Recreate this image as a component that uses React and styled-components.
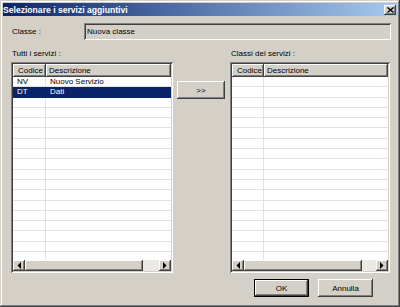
import React from 'react';
import styled, { createGlobalStyle } from 'styled-components';

const GlobalStyle = createGlobalStyle`
  html, body { margin: 0; padding: 0; background: #d4d0c8; }
  * { box-sizing: border-box; }
`;

const raised = `
  box-shadow: inset -1px -1px #404040, inset 1px 1px #ffffff,
    inset -2px -2px #808080, inset 2px 2px #d4d0c8;
`;
const sunken = `
  box-shadow: inset 1px 1px #808080, inset -1px -1px #ffffff,
    inset 2px 2px #404040, inset -2px -2px #d4d0c8;
`;

const Window = styled.div`
  width: 400px;
  height: 307px;
  padding: 3px;
  background: #d4d0c8;
  box-shadow: inset -1px -1px #404040, inset 1px 1px #d4d0c8,
    inset -2px -2px #808080, inset 2px 2px #ffffff;
  display: flex;
  flex-direction: column;
  font-family: "Liberation Sans", Arial, sans-serif;
  font-size: 8px;
  color: #000;
`;

const TitleBar = styled.div`
  height: 13px;
  display: flex;
  align-items: center;
  padding: 0 1px 0 0;
  background: linear-gradient(to right, #0a246a, #a6caf0);
`;

const Title = styled.span`
  color: #fff;
  font-weight: bold;
  font-size: 8.6px;
  white-space: nowrap;
`;

const CloseButton = styled.div`
  margin-left: auto;
  width: 12px;
  height: 10px;
  background: #d4d0c8;
  ${raised};
  display: flex;
  align-items: center;
  justify-content: center;
`;

const Content = styled.div`
  flex: 1;
  display: flex;
  flex-direction: column;
  padding: 0 6px 0 8px;
`;

const ClasseRow = styled.div`
  margin-top: 7px;
  height: 17px;
  display: flex;
  align-items: center;
`;

const FieldLabel = styled.span`
  width: 73px;
  padding-left: 1px;
`;

const ReadOnlyField = styled.div`
  flex: 1;
  height: 17px;
  padding: 0 3px;
  display: flex;
  align-items: center;
  background: #d4d0c8;
  ${sunken};
`;

const Columns = styled.div`
  margin-top: 9px;
  display: grid;
  grid-template-columns: 162px 57px 160px;
`;

const Column = styled.div`
  display: flex;
  flex-direction: column;
`;

const GroupLabel = styled.div`
  height: 10px;
  line-height: 10px;
  padding-left: 1px;
  margin-bottom: 3px;
`;

const Middle = styled.div`
  padding: 32px 0 0 4px;
`;

const Button = styled.div`
  width: ${p => p.$w}px;
  height: 18px;
  display: flex;
  align-items: center;
  justify-content: center;
  background: #d4d0c8;
  ${raised};
  ${p => p.$default && `
    box-shadow: inset 0 0 0 1px #000, inset -2px -2px #404040, inset 2px 2px #ffffff,
      inset -3px -3px #808080;
  `}
`;

const ListBox = styled.div`
  height: 211px;
  padding: 2px;
  background: #fff;
  ${sunken};
  display: flex;
  flex-direction: column;
  overflow: hidden;
`;

const HeaderRow = styled.div`
  display: grid;
  grid-template-columns: ${p => p.$first}px 1fr;
  height: 13px;
  flex: 0 0 13px;
`;

const HeaderCell = styled.div`
  background: #d4d0c8;
  ${raised};
  padding-left: ${p => p.$pad}px;
  display: flex;
  align-items: center;
  white-space: nowrap;
`;

const Body = styled.div`
  flex: 1;
  overflow: hidden;
  display: flex;
  flex-direction: column;
`;

const Row = styled.div`
  flex: 0 0 10.3px;
  display: grid;
  grid-template-columns: ${p => p.$first}px 1fr;
  background: ${p => (p.$selected ? '#0a246a' : '#fff')};
  color: ${p => (p.$selected ? '#fff' : '#000')};
  border-bottom: 1px solid ${p => (p.$selected ? '#0a246a' : '#e3e1dc')};
`;

const Cell = styled.div`
  padding-left: 4px;
  display: flex;
  align-items: center;
  white-space: nowrap;
  border-right: ${p => (p.$divider ? '1px solid #e3e1dc' : 'none')};
`;

const HScroll = styled.div`
  flex: 0 0 11px;
  display: flex;
`;

const ScrollArrow = styled.div`
  width: 12px;
  background: #d4d0c8;
  ${raised};
  display: flex;
  align-items: center;
  justify-content: center;
`;

const ScrollThumb = styled.div`
  width: ${p => p.$w}px;
  background: #d4d0c8;
  ${raised};
`;

const ScrollTrack = styled.div`
  flex: 1;
  background: #ebe9e5;
`;

const Footer = styled.div`
  margin-top: 6px;
  display: flex;
  justify-content: flex-end;
  gap: 9px;
  padding-right: 18px;
`;

const Arrow = ({ dir }) => (
  <svg width="4" height="7" viewBox="0 0 4 7">
    {dir === 'left'
      ? <polygon points="4,0 4,7 0.5,3.5" fill="#000" />
      : <polygon points="0,0 0,7 3.5,3.5" fill="#000" />}
  </svg>
);

const ListView = ({ first, rows, selected, thumb }) => {
  const filled = [...rows];
  while (filled.length < 18) filled.push(null);
  return (
    <ListBox>
      <HeaderRow $first={first}>
        <HeaderCell $pad={5}>Codice</HeaderCell>
        <HeaderCell $pad={3}>Descrizione</HeaderCell>
      </HeaderRow>
      <Body>
        {filled.map((r, i) => (
          <Row key={i} $first={first} $selected={i === selected}>
            <Cell $divider={i !== selected}>{r ? r[0] : ''}</Cell>
            <Cell>{r ? r[1] : ''}</Cell>
          </Row>
        ))}
      </Body>
      <HScroll>
        <ScrollArrow><Arrow dir="left" /></ScrollArrow>
        <ScrollThumb $w={thumb} />
        <ScrollTrack />
        <ScrollArrow><Arrow dir="right" /></ScrollArrow>
      </HScroll>
    </ListBox>
  );
};

const allServices = [
  ['NV', 'Nuovo Servizio'],
  ['DT', 'Dati'],
];

export default function App() {
  return (
    <>
      <GlobalStyle />
      <Window>
        <TitleBar>
          <Title>Selezionare i servizi aggiuntivi</Title>
          <CloseButton>
            <svg width="7" height="6" viewBox="0 0 7 6">
              <path d="M0.5 0.5 L6.5 5.5 M6.5 0.5 L0.5 5.5" stroke="#000" strokeWidth="1.4" />
            </svg>
          </CloseButton>
        </TitleBar>
        <Content>
          <ClasseRow>
            <FieldLabel>Classe :</FieldLabel>
            <ReadOnlyField>Nuova classe</ReadOnlyField>
          </ClasseRow>
          <Columns>
            <Column>
              <GroupLabel>Tutti i servizi :</GroupLabel>
              <ListView first={33} rows={allServices} selected={1} thumb={118} />
            </Column>
            <Middle>
              <Button $w={48}>&gt;&gt;</Button>
            </Middle>
            <Column>
              <GroupLabel>Classi dei servizi :</GroupLabel>
              <ListView first={32} rows={[]} selected={-1} thumb={118} />
            </Column>
          </Columns>
          <Footer>
            <Button $w={55} $default>OK</Button>
            <Button $w={55}>Annulla</Button>
          </Footer>
        </Content>
      </Window>
    </>
  );
}
